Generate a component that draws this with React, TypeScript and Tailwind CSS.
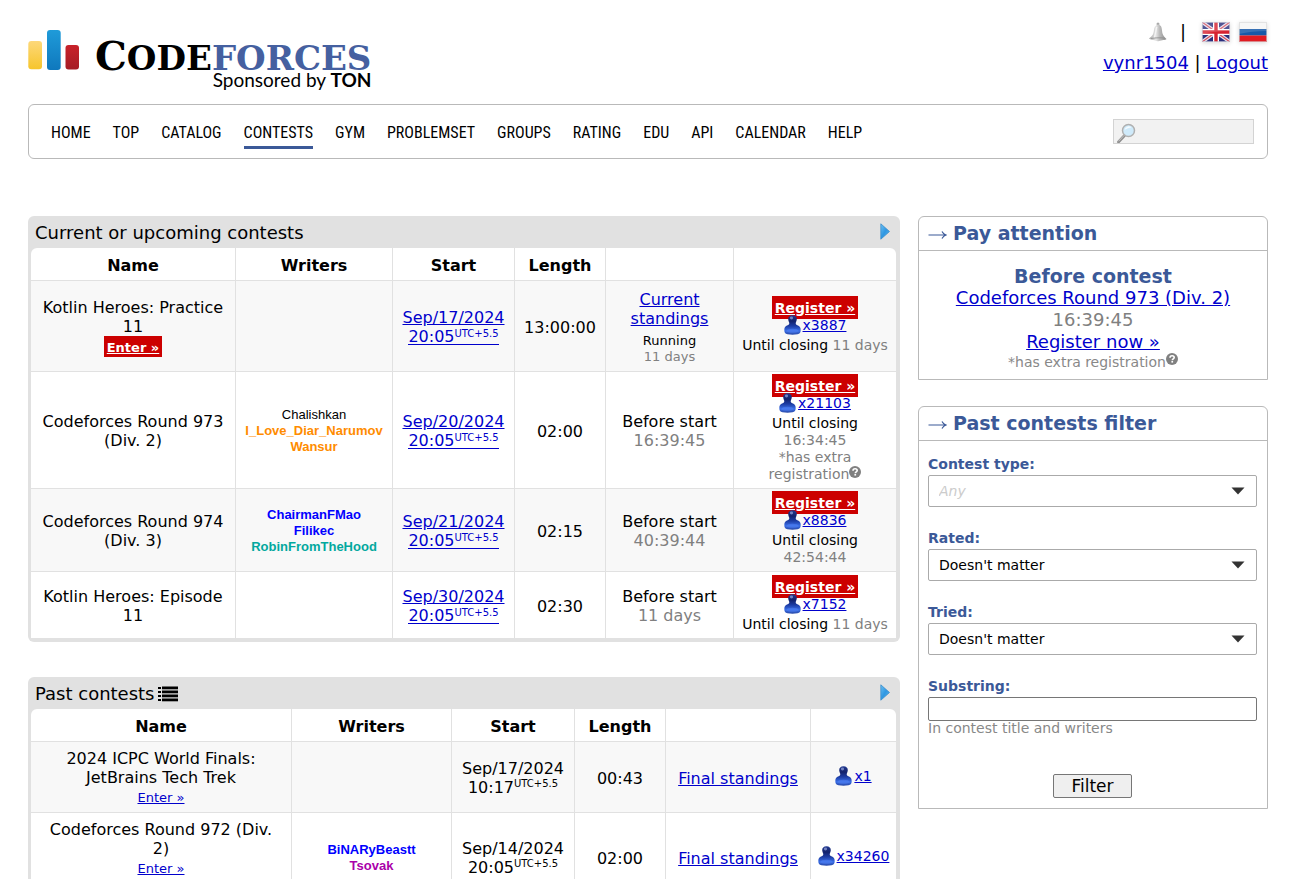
import React from "react";

const link = "text-[#0000cc] underline";

function UserIcon() {
  return (
    <svg viewBox="0 0 17 20" className="h-5 w-[17px] shrink-0" aria-hidden="true">
      <defs>
        <linearGradient id="userBody" x1="0" y1="0" x2="0" y2="1">
          <stop offset="0" stopColor="#223a90" />
          <stop offset="0.3" stopColor="#13226c" />
          <stop offset="0.55" stopColor="#1c3ca4" />
          <stop offset="0.8" stopColor="#3a6ee6" />
          <stop offset="1" stopColor="#2a4aa8" />
        </linearGradient>
      </defs>
      <path
        d="M8.500 0.300C11.300 0.300 12.900 2 12.800 4.200C12.700 5.800 12 6.800 11.800 7.800C11.600 8.800 11.800 9.400 12.800 10C15.400 11 16.700 12 16.700 15C16.700 18 15.800 18.800 13.500 19.200C10 19.800 7 19.800 3.500 19.200C1.200 18.800 .3 18 .3 15C.3 12 1.600 11 4.200 10C5.200 9.400 5.400 8.800 5.200 7.800C5 6.800 4.300 5.800 4.200 4.200C4.100 2 5.700 .3 8.500 .3Z"
        fill="url(#userBody)"
      />
      <ellipse cx="7.500" cy="3" rx="1.600" ry="1.400" fill="#9aa8de" opacity="0.7" />
      <path d="M2 16.500C2.500 14.500 5 13.800 8.500 13.800S14.500 14.500 15 16.500C12 18.200 5 18.200 2 16.500Z" fill="#5a8cff" opacity="0.4" />
    </svg>
  );
}

function HelpIcon() {
  return (
    <svg viewBox="0 0 12 12" className="inline-block h-3 w-3 align-top" aria-hidden="true">
      <circle cx="6" cy="6" r="6" fill="#808080" />
      <path d="M4 4.700C4 3.400 4.900 2.700 6.100 2.700s2.100.7 2.100 1.700c0 1.400-1.900 1.500-1.900 2.800" fill="none" stroke="#fff" strokeWidth="1.600" />
      <rect x="5.400" y="8" width="1.700" height="1.600" fill="#fff" />
    </svg>
  );
}

function Bell() {
  return (
    <svg viewBox="0 0 20 20" className="h-5 w-5" aria-hidden="true">
      <defs>
        <linearGradient id="bell" x1="0" x2="1">
          <stop offset="0" stopColor="#a4a4a4" />
          <stop offset="0.4" stopColor="#e6e6e6" />
          <stop offset="0.6" stopColor="#bcbcbc" />
          <stop offset="1" stopColor="#8e8e8e" />
        </linearGradient>
      </defs>
      <circle cx="10" cy="2" r="1.500" fill="#aaa" />
      <path d="M10 2.500c3 .4 3.800 2.600 4 6 .2 3.500 1.300 5.500 4.500 8.500-1 1.500-5 .8-7.500 2-1.500.6-3-.3-4.500-.8-1.700-.5-4-.2-5.500-1.700 3.500-2.500 4.500-4.500 4.900-8C6.200 5.200 7.300 2.900 10 2.500z" fill="url(#bell)" />
      <path d="M8.800 5c-1 3-1.200 7-2.600 11" stroke="#f4f4f4" strokeWidth="1.400" fill="none" />
      <path d="M3 16.500c3-.7 11-1 14-.3" stroke="#8a8a8a" strokeWidth=".8" fill="none" />
    </svg>
  );
}

function FlagGB() {
  return (
    <svg viewBox="0 0 28 20" className="h-5 w-7 drop-shadow-sm" aria-label="English">
      <rect width="28" height="20" fill="#2a2f7c" />
      <path d="M0 0L28 20M28 0L0 20" stroke="#e6dfec" strokeWidth="3.600" />
      <path d="M0 0L28 20M28 0L0 20" stroke="#d4505e" strokeWidth="1.200" />
      <path d="M14 0V20M0 10H28" stroke="#fff" strokeWidth="6" />
      <path d="M14 0V20M0 10H28" stroke="#d6202f" strokeWidth="3.400" />
      <path d="M0 0H28V9C18 9 8 10 0 12z" fill="#fff" opacity=".18" />
      <rect x=".5" y=".5" width="27" height="19" fill="none" stroke="#cfcfdc" strokeOpacity=".7" />
    </svg>
  );
}

function FlagRU() {
  return (
    <svg viewBox="0 0 28 20" className="h-5 w-7 drop-shadow-sm" aria-label="Русский">
      <rect width="28" height="7" fill="#f7f7f7" />
      <rect y="7" width="28" height="6.500" fill="#1659a8" />
      <rect y="13.500" width="28" height="6.500" fill="#e01b22" />
      <path d="M0 7H28V9C18 9 8 10 0 12z" fill="#fff" opacity=".15" />
      <rect x=".5" y=".5" width="27" height="19" fill="none" stroke="#d5d5d5" strokeOpacity=".6" />
    </svg>
  );
}

function Magnifier() {
  return (
    <svg viewBox="0 0 20 20" className="pointer-events-none absolute left-1 top-1 h-5 w-5" aria-hidden="true">
      <path d="M7.500 12.500L1.500 19" stroke="#8f8f8f" strokeWidth="2.800" strokeLinecap="round" />
      <path d="M7 12.500L1.800 18" stroke="#c9c9c9" strokeWidth="1" strokeLinecap="round" />
      <circle cx="11.500" cy="7.500" r="6" fill="#cfeafa" stroke="#b0b0b0" strokeWidth="1.500" />
      <path d="M7.500 7a4.200 4.200 0 0 1 7-2.500c-2 0-5 1-7 2.500z" fill="#f4fbff" />
    </svg>
  );
}

function PlayArrow() {
  return (
    <svg viewBox="0 0 10 17" className="mb-[2px] h-[17px] w-[10px]" aria-hidden="true">
      <defs>
        <linearGradient id="play" x1="0" y1="0" x2="1" y2="1">
          <stop offset="0" stopColor="#6cc1f3" />
          <stop offset="0.5" stopColor="#2f97e2" />
          <stop offset="1" stopColor="#5cb8f0" />
        </linearGradient>
      </defs>
      <path d="M.8.800L9.500 8.500L.8 16.200z" fill="url(#play)" stroke="#3a8dcc" strokeWidth=".8" strokeLinejoin="round" />
    </svg>
  );
}

function ListIcon() {
  return (
    <svg viewBox="0 0 20 16" className="mt-[2px] h-4 w-5" aria-hidden="true">
      {[0, 4, 8, 12].map((y) => (
        <g key={y}>
          <rect x="0" y={y + 1} width="3" height="2" />
          <rect x="4" y={y + 0.5} width="16" height="2.800" />
        </g>
      ))}
    </svg>
  );
}

const nav = ["Home", "Top", "Catalog", "Contests", "Gym", "Problemset", "Groups", "Rating", "Edu", "API", "Calendar", "Help"];

const tones = {
  black: "text-black font-normal",
  orange: "text-[#ff8c00] font-bold",
  blue: "text-[#0000ff] font-bold",
  cyan: "text-[#03a89e] font-bold",
  violet: "text-[#aa00aa] font-bold",
};
type Writer = { name: string; tone: keyof typeof tones };

function Writers({ list }: { list: Writer[] }) {
  return (
    <div className="font-['Liberation_Sans',sans-serif] text-[13px] leading-4">
      {list.map((w) => (
        <div key={w.name}>
          <a href="#" className={tones[w.tone]}>{w.name}</a>
        </div>
      ))}
    </div>
  );
}

function StartTime({ date, time }: { date: string; time: string }) {
  return (
    <>
      <span className="block">{date}</span>
      <span className="inline-flex items-start">
        {time}
        <span className="text-[10px] leading-[12px]">UTC+5.5</span>
      </span>
    </>
  );
}

function StartLink({ date, time }: { date: string; time: string }) {
  return (
    <a href="#" className="block text-[#0000cc]">
      <span className="block underline">{date}</span>
      <span className="inline-flex items-start border-b border-[#0000cc] leading-[14px]">
        {time}
        <span className="text-[10px] leading-[8px]">UTC+5.5</span>
      </span>
    </a>
  );
}

function Participants({ count }: { count: string }) {
  return (
    <a href="#" className="inline-flex items-center gap-[2px] text-[14px] leading-4 text-[#0000cc]">
      <UserIcon />
      <span className="underline">{count}</span>
    </a>
  );
}

function Register({ count, children }: { count: string; children: React.ReactNode }) {
  return (
    <div className="pb-[5px] text-[14px] leading-[17px]">
      <a href="#" className="mx-auto block h-[23px] w-fit bg-[#cc0000] px-[3px] font-bold leading-[24px] text-white underline">
        Register »
      </a>
      <div className="mb-[6px] flex h-3 items-center justify-center">
        <Participants count={count} />
      </div>
      {children}
    </div>
  );
}

const Gray = ({ children }: { children: React.ReactNode }) => <span className="text-[#808080]">{children}</span>;

function Panel({ title, icon, children }: { title: string; icon?: React.ReactNode; children: React.ReactNode }) {
  return (
    <section className="rounded-md bg-[#e1e1e1] pb-1 pl-[3px] pr-1">
      <header className="flex h-8 items-center justify-between pl-1 pr-[6px]">
        <h2 className="flex items-center gap-[3px] text-[18px]">
          {title}
          {icon}
        </h2>
        <button type="button" aria-label="Expand"><PlayArrow /></button>
      </header>
      <div className="overflow-hidden rounded-t-md bg-white">{children}</div>
    </section>
  );
}

function Heads({ items }: { items: string[] }) {
  return (
    <thead>
      <tr className="h-8">
        {items.map((h, i) => (
          <th key={i} className="border-l border-[#e1e1e1] pt-[2px] font-bold leading-[19px] first:border-l-0">{h}</th>
        ))}
      </tr>
    </thead>
  );
}

const cell = "border-l border-t border-[#e1e1e1] px-1 pb-0 pt-[2px] first:border-l-0";

const upcoming = [
  {
    name: "Kotlin Heroes: Practice 11",
    height: "h-[91px]",
    enter: true,
    writers: [] as Writer[],
    date: "Sep/17/2024",
    length: "13:00:00",
    state: (
      <>
        <a href="#" className={link}>Current standings</a>
        <div className="mt-[5px] text-[13px] leading-4">Running<br /><Gray>11 days</Gray></div>
      </>
    ),
    count: "x3887",
    closing: <>Until closing <Gray>11 days</Gray></>,
  },
  {
    name: "Codeforces Round 973 (Div. 2)",
    height: "h-[117px]",
    writers: [
      { name: "Chalishkan", tone: "black" },
      { name: "I_Love_Diar_Narumov", tone: "orange" },
      { name: "Wansur", tone: "orange" },
    ] as Writer[],
    date: "Sep/20/2024",
    length: "02:00",
    state: <>Before start<br /><Gray>16:39:45</Gray></>,
    count: "x21103",
    closing: (
      <>
        Until closing<br />
        <Gray>16:34:45<br />*has extra<br />registration<HelpIcon /></Gray>
      </>
    ),
  },
  {
    name: "Codeforces Round 974 (Div. 3)",
    height: "h-[83px]",
    writers: [
      { name: "ChairmanFMao", tone: "blue" },
      { name: "Filikec", tone: "blue" },
      { name: "RobinFromTheHood", tone: "cyan" },
    ] as Writer[],
    date: "Sep/21/2024",
    length: "02:15",
    state: <>Before start<br /><Gray>40:39:44</Gray></>,
    count: "x8836",
    closing: <>Until closing<br /><Gray>42:54:44</Gray></>,
  },
  {
    name: "Kotlin Heroes: Episode 11",
    height: "h-[67px]",
    writers: [] as Writer[],
    date: "Sep/30/2024",
    length: "02:30",
    state: <>Before start<br /><Gray>11 days</Gray></>,
    count: "x7152",
    closing: <>Until closing <Gray>11 days</Gray></>,
  },
];

const past = [
  { name: "2024 ICPC World Finals: JetBrains Tech Trek", height: "h-[71px]", writers: [] as Writer[], date: "Sep/17/2024", time: "10:17", length: "00:43", count: "x1" },
  {
    name: "Codeforces Round 972 (Div. 2)",
    height: "h-[89px]",
    writers: [
      { name: "BiNARyBeastt", tone: "blue" },
      { name: "Tsovak", tone: "violet" },
    ] as Writer[],
    date: "Sep/14/2024",
    time: "20:05",
    length: "02:00",
    count: "x34260",
  },
];

const tableClass = "w-full table-fixed border-separate border-spacing-0 text-center text-[16px] leading-[19px]";

function SideBox({ title, children }: { title: string; children: React.ReactNode }) {
  return (
    <section className="rounded-t-md border border-[#b9b9b9]">
      <h2 className="flex h-[34px] items-center gap-[6px] border-b border-[#b9b9b9] px-[9px] text-[19px] font-bold text-[#3b5998]">
        <svg viewBox="0 0 19 10" className="mt-[2px] h-[10px] w-[19px]" aria-hidden="true">
          <path d="M.5 5H18M14 1.500C15 3.500 16 4.300 18 5C16 5.700 15 6.500 14 8.500" fill="none" stroke="#3b5998" strokeWidth="1.200" />
        </svg>
        {title}
      </h2>
      {children}
    </section>
  );
}

const labelClass = "block pb-[2px] text-[14px] font-bold leading-[18px] text-[#3b5998]";

function SelectField({ id, label, options, muted }: { id: string; label: string; options: string[]; muted?: boolean }) {
  return (
    <div>
      <label htmlFor={id} className={labelClass}>{label}</label>
      <div className="relative">
        <select
          id={id}
          className={
            muted
              ? "block h-8 w-full appearance-none rounded-[2px] border border-[#aaaaaa] bg-white px-[10px] text-[14px] italic text-[#cccccc]"
              : "block h-8 w-full appearance-none rounded-[2px] border border-[#aaaaaa] bg-white px-[10px] text-[14px] text-black"
          }
        >
          {options.map((o) => <option key={o}>{o}</option>)}
        </select>
        <svg viewBox="0 0 14 8" className="pointer-events-none absolute right-3 top-3 h-2 w-[14px]" aria-hidden="true">
          <path d="M.5.500H13.500L7 7.500z" fill="#333" />
        </svg>
      </div>
    </div>
  );
}

export default function App() {
  return (
    <div className="min-h-screen bg-white pl-7 pr-[27px] font-['DejaVu_Sans',sans-serif] text-black">
      <header className="flex h-[104px] justify-between">
        <a href="#" className="flex pt-[30px]" aria-label="Codeforces">
          <svg viewBox="0 0 52 41" className="h-[41px] w-[52px]" aria-hidden="true">
            <defs>
              <linearGradient id="barY" x1="0" y1="0" x2="0" y2="1"><stop offset="0" stopColor="#fdd87a" /><stop offset="1" stopColor="#f6c52c" /></linearGradient>
              <linearGradient id="barB" x1="0" y1="0" x2="0" y2="1"><stop offset="0" stopColor="#1f9bd9" /><stop offset="1" stopColor="#0f78bd" /></linearGradient>
              <linearGradient id="barR" x1="0" y1="0" x2="0" y2="1"><stop offset="0" stopColor="#c8222a" /><stop offset="1" stopColor="#a51c24" /></linearGradient>
            </defs>
            <rect x="0.300" y="11" width="13.700" height="28.300" rx="3" fill="url(#barY)" />
            <rect x="19" y="0" width="13.700" height="40" rx="3" fill="url(#barB)" />
            <rect x="37.500" y="15" width="13.500" height="24.500" rx="3" fill="url(#barR)" />
          </svg>
          <span className="flex flex-col items-end pl-[15px] pt-[10px]">
            <span className="font-['DejaVu_Serif',serif] text-[34px] font-bold leading-8">
              <span className="text-[40px]">C</span>ODE<span className="text-[#4560a0]">FORCES</span>
            </span>
            <span className="-mt-1 font-['Lato',sans-serif] text-[19px] leading-5">
              Sponsored by <b>TON</b>
            </span>
          </span>
        </a>
        <div className="flex flex-col items-end pt-[21px] text-[18px]">
          <div className="flex h-[22px] items-center pr-px">
            <a href="#" aria-label="Notifications"><Bell /></a>
            <span className="pl-3 pr-4 leading-5">|</span>
            <span className="flex gap-[9px]">
              <a href="#"><FlagGB /></a>
              <a href="#"><FlagRU /></a>
            </span>
          </div>
          <div className="mt-[9px] leading-[22px]">
            <a href="#" className={link}>vynr1504</a> | <a href="#" className={link}>Logout</a>
          </div>
        </div>
      </header>

      <nav className="flex h-[55px] items-center justify-between rounded-md border border-[#b9b9b9] pl-[22px] pr-[13px]">
        <ul className="flex gap-[22px] pt-[3px] font-['Roboto_Condensed','Open_Sans_Condensed',sans-serif] text-[16px] font-normal uppercase leading-[26px]">
          {nav.map((n) => (
            <li key={n}>
              <a
                href="#"
                className={n === "Contests" ? "block border-b-[3px] border-[#3b5998] pt-[3px]" : "block border-b-[3px] border-transparent pt-[3px]"}
              >
                {n}
              </a>
            </li>
          ))}
        </ul>
        <div className="relative">
          <Magnifier />
          <input type="text" aria-label="Search" className="block h-[25px] w-[141px] border border-[#d3d3d3] bg-[#f2f2f2] pl-7 text-[14px]" />
        </div>
      </nav>

      <div className="mt-[57px] flex items-start gap-[18px]">
        <main className="flex min-w-0 flex-1 flex-col gap-[35px]">
          <Panel title="Current or upcoming contests">
            <table className={tableClass}>
              <colgroup>
                <col />
                <col className="w-[157px]" />
                <col className="w-[122px]" />
                <col className="w-[91px]" />
                <col className="w-[128px]" />
                <col className="w-[163px]" />
              </colgroup>
              <Heads items={["Name", "Writers", "Start", "Length", "", ""]} />
              <tbody>
                {upcoming.map((c) => (
                  <tr key={c.name} className={`${c.height} odd:bg-[#f8f8f8]`}>
                    <td className={cell}>
                      {c.name}
                      {c.enter && (
                        <a href="#" className="mx-auto block h-[21px] w-fit bg-[#cc0000] px-[3px] text-[13px] font-bold leading-[23px] text-white underline">
                          Enter »
                        </a>
                      )}
                    </td>
                    <td className={cell}><Writers list={c.writers} /></td>
                    <td className={cell}><StartLink date={c.date} time="20:05" /></td>
                    <td className={cell}>{c.length}</td>
                    <td className={cell}>{c.state}</td>
                    <td className={cell}><Register count={c.count}>{c.closing}</Register></td>
                  </tr>
                ))}
              </tbody>
            </table>
          </Panel>

          <Panel title="Past contests" icon={<ListIcon />}>
            <table className={tableClass}>
              <colgroup>
                <col />
                <col className="w-[160px]" />
                <col className="w-[123px]" />
                <col className="w-[91px]" />
                <col className="w-[145px]" />
                <col className="w-[86px]" />
              </colgroup>
              <Heads items={["Name", "Writers", "Start", "Length", "", ""]} />
              <tbody>
                {past.map((c) => (
                  <tr key={c.name} className={`${c.height} odd:bg-[#f8f8f8]`}>
                    <td className={`${cell} align-top`}>
                      <div className="px-2 pt-[5px]">{c.name}</div>
                      <a href="#" className={`text-[13px] leading-5 ${link}`}>Enter »</a>
                    </td>
                    <td className={cell}><Writers list={c.writers} /></td>
                    <td className={cell}><StartTime date={c.date} time={c.time} /></td>
                    <td className={cell}>{c.length}</td>
                    <td className={cell}><a href="#" className={link}>Final standings</a></td>
                    <td className={cell}><Participants count={c.count} /></td>
                  </tr>
                ))}
              </tbody>
            </table>
          </Panel>
        </main>

        <aside className="flex w-[350px] shrink-0 flex-col gap-[26px]">
          <SideBox title="Pay attention">
            <div className="pb-2 pt-[14px] text-center text-[18px] leading-[22px]">
              <div className="text-[19px] font-bold text-[#3b5998]">Before contest</div>
              <a href="#" className={link}>Codeforces Round 973 (Div. 2)</a>
              <div className="text-[#808080]">16:39:45</div>
              <a href="#" className={link}>Register now »</a>
              <div className="text-[14px] leading-[18px] text-[#888888]">*has extra registration<HelpIcon /></div>
            </div>
          </SideBox>

          <SideBox title="Past contests filter">
            <form className="flex flex-col gap-[22px] px-[9px] pb-[10px] pr-[10px] pt-[14px]" onSubmit={(e) => e.preventDefault()}>
              <SelectField id="type" label="Contest type:" options={["Any"]} muted />
              <SelectField id="rated" label="Rated:" options={["Doesn't matter"]} />
              <SelectField id="tried" label="Tried:" options={["Doesn't matter"]} />
              <div>
                <label htmlFor="substring" className={labelClass}>Substring:</label>
                <input id="substring" type="text" className="block h-6 w-full rounded-[2px] border border-[#767676] bg-white px-1 text-[14px]" />
                <p className="text-[14px] leading-[14px] text-[#888888]">In contest title and writers</p>
              </div>
              <button type="submit" className="mx-auto mt-[17px] h-6 w-[79px] rounded-[2px] border border-[#767676] bg-[#efefef] text-[17px] leading-[22px]">
                Filter
              </button>
            </form>
          </SideBox>
        </aside>
      </div>
    </div>
  );
}
